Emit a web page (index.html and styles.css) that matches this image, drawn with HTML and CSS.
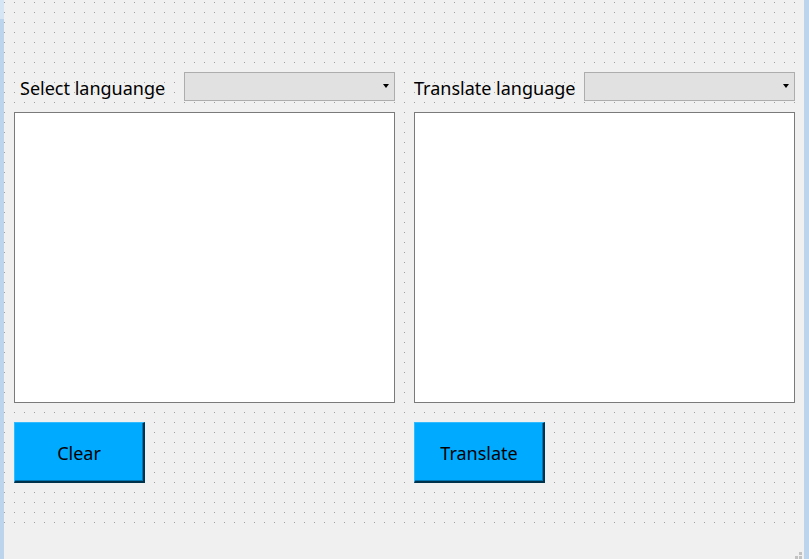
FILE: index.html
```html
<!DOCTYPE html>
<html>
<head>
<meta charset="utf-8">
<link rel="stylesheet" href="styles.css">
</head>
<body>
<div class="designer">
  <div class="strip strip-left"><div class="strip-top"></div></div>
  <div class="surface">
    <div class="form">
      <div class="column">
        <div class="header">
          <span class="label label-left">Select languange</span>
          <div class="combo"><span class="arrow"></span></div>
        </div>
        <div class="textbox"></div>
        <button class="btn">Clear</button>
      </div>
      <div class="column">
        <div class="header">
          <span class="label">Translate language</span>
          <div class="combo"><span class="arrow"></span></div>
        </div>
        <div class="textbox"></div>
        <button class="btn">Translate</button>
      </div>
    </div>
    <div class="grip">
      <span class="g g1"></span>
      <span class="g g2"></span>
      <span class="g g3"></span>
    </div>
  </div>
  <div class="strip strip-right"></div>
</div>
</body>
</html>
```
FILE: styles.css
```css
html, body {
  margin: 0;
  padding: 0;
  background: #f0f0f0;
}
body {
  width: 809px;
  height: 559px;
  overflow: hidden;
  font-family: "Noto Sans", "Open Sans", sans-serif;
}
.designer {
  display: flex;
  height: 559px;
}
.strip {
  background: #bcd4ec;
  flex: none;
}
.strip-left {
  width: 4px;
}
.strip-top {
  height: 19px;
  background: #d6e5f4;
}
.strip-right {
  width: 5px;
}
.surface {
  flex: 1;
  position: relative;
  background: #f0f0f0;
}
.form {
  height: 528px;
  box-sizing: border-box;
  padding: 72px 0 0 10px;
  display: grid;
  grid-template-columns: 381px 381px;
  column-gap: 19px;
  align-content: start;
  background-image: url("data:image/svg+xml,%3Csvg xmlns='http://www.w3.org/2000/svg' width='10' height='10'%3E%3Crect width='1' height='1' fill='%23a0a0a0'/%3E%3C/svg%3E");
  background-position: 0 2px;
  background-size: 10px 10px;
  background-repeat: repeat;
  width: 800px;
}
.column {
  display: flex;
  flex-direction: column;
  align-items: flex-start;
}
.header {
  display: flex;
  align-items: center;
  width: 100%;
  height: 29px;
}
.label {
  font-size: 18px;
  color: #000;
  line-height: 29px;
  padding-top: 3px;
  white-space: nowrap;
}
.label-left {
  padding-left: 6px;
}
.combo {
  margin-left: auto;
  width: 211px;
  height: 29px;
  box-sizing: border-box;
  background: #e1e1e1;
  border: 1px solid #adadad;
  position: relative;
}
.arrow {
  position: absolute;
  right: 5px;
  top: 11px;
  width: 0;
  height: 0;
  border-left: 3.5px solid transparent;
  border-right: 3.5px solid transparent;
  border-top: 4px solid #000;
}
.textbox {
  margin-top: 11px;
  width: 381px;
  height: 291px;
  box-sizing: border-box;
  background: #fff;
  border: 1px solid #7a7a7a;
}
.btn {
  margin-top: 19px;
  width: 131px;
  height: 61px;
  box-sizing: border-box;
  background: #00aaff;
  border-style: solid;
  border-width: 1px 2px 2px 1px;
  border-color: #33bbff #00324c #00324c #33bbff;
  box-shadow: inset -1px -1px 0 #0077b3;
  font-family: inherit;
  font-size: 18px;
  color: #000;
  padding: 0;
  padding-top: 2px;
}
.grip {
  position: absolute;
  right: 0;
  bottom: 0;
  width: 9px;
  height: 7px;
}
.g {
  position: absolute;
  width: 3px;
  height: 3px;
  background: #c2c2c2;
}
.g1 { left: 4px; top: 0; }
.g2 { left: 4px; top: 4px; }
.g3 { left: 0; top: 4px; }
```
